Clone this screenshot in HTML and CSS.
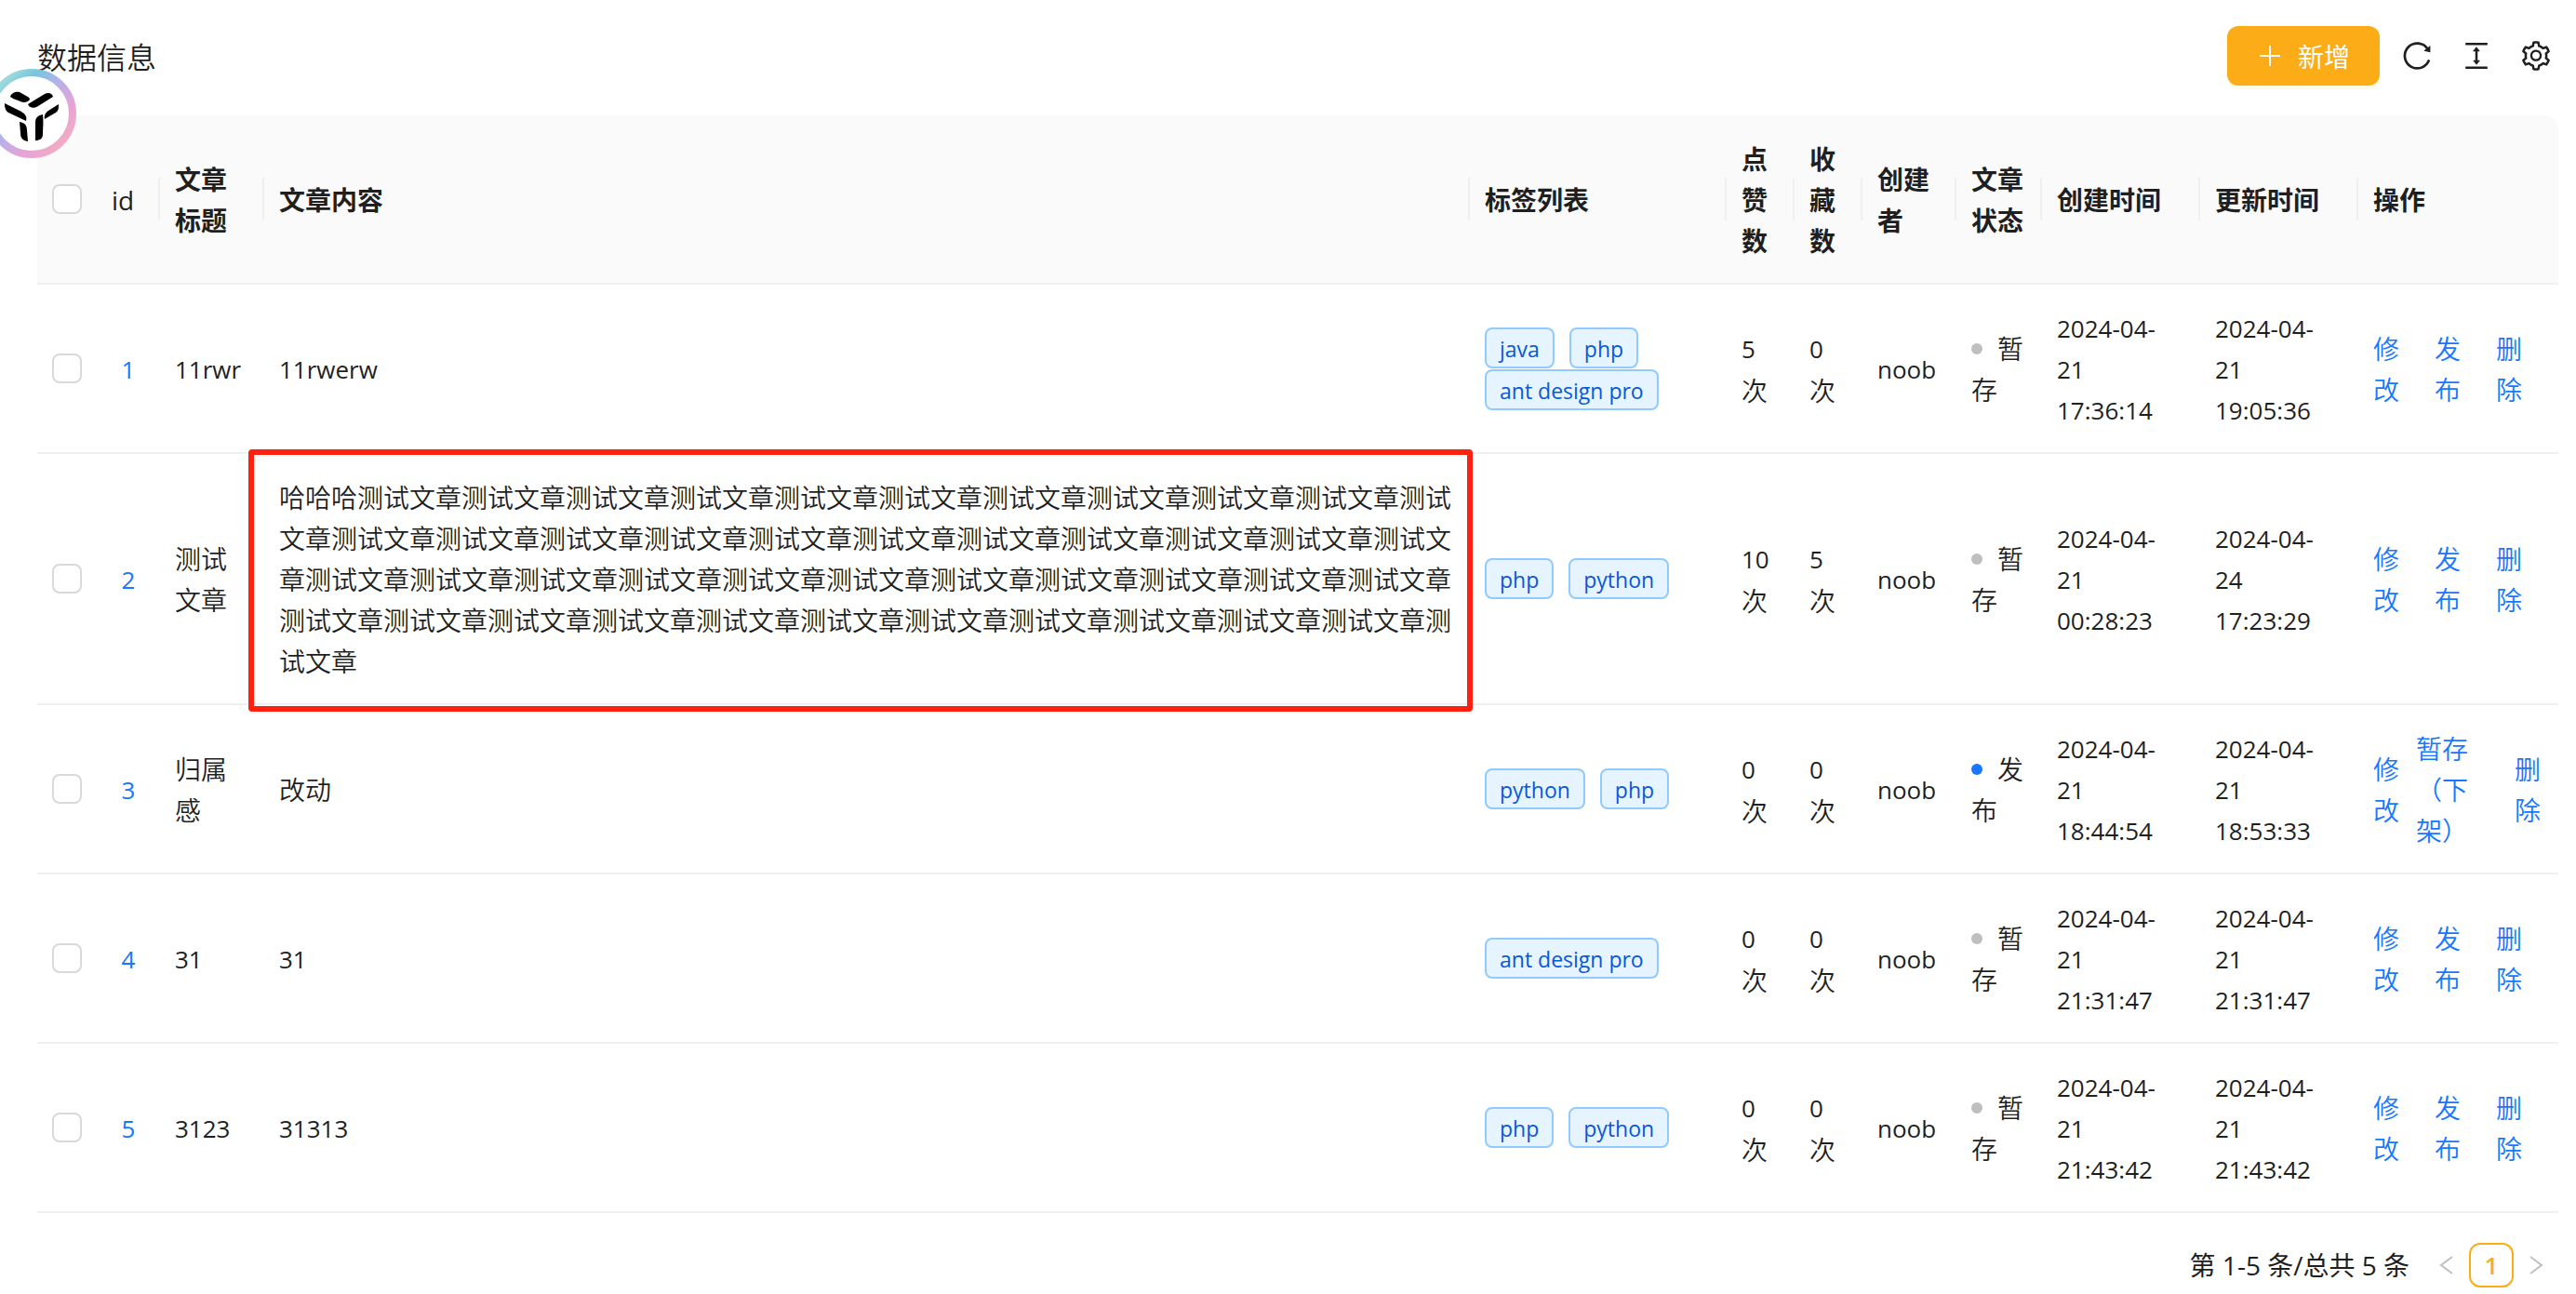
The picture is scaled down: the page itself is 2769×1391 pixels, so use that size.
FILE: index.html
```html
<!DOCTYPE html>
<html lang="zh-CN">
<head>
<meta charset="utf-8">
<title>数据信息</title>
<link rel="stylesheet" href="styles.css">
</head>
<body>
<button class="float-ball" type="button" aria-label="助手">
  <svg viewBox="0 0 96 96" width="96" height="96">
    <defs>
      <linearGradient id="ring" x1="0.1" y1="0.1" x2="0.9" y2="0.9">
        <stop offset="0" stop-color="#a5dedb"/>
        <stop offset="0.22" stop-color="#78c5df"/>
        <stop offset="0.48" stop-color="#b9b0ea"/>
        <stop offset="0.75" stop-color="#e8a2d6"/>
        <stop offset="1" stop-color="#f3adc0"/>
      </linearGradient>
    </defs>
    <circle cx="48" cy="48" r="44" fill="#fff" stroke="url(#ring)" stroke-width="8"/>
    <g fill="#000">
      <path d="M25 30C26 26 31 24 35 25L42 29C45 30 46 32 46 33C44 36 39 37 36 35L28 32Z"/>
      <path d="M44 38L62 27C66 25 70 26 71 30L55 40C51 43 45 42 44 38Z"/>
      <path d="M19 37L37 46C42 49 43 52 42 56L23 47C20 45 19 42 19 37Z"/>
      <path d="M77 38C77 42 77 45 74 47L62 54C61 50 63 47 66 45Z"/>
      <path d="M60 49C61 57 60 64 60 70C60 75 57 77 52 77V58C52 52 55 50 60 49Z"/>
      <path d="M35 57C41 58 43 61 43 66L44 78C38 77 36 74 36 69Z"/>
    </g>
  </svg>
</button>

<main class="page">
  <header class="toolbar">
    <h1 class="toolbar-title">数据信息</h1>
    <div class="toolbar-actions">
      <button class="btn-primary" type="button">
        <svg class="icon-plus" viewBox="0 0 28 28"><path d="M14 3V25M3 14H25" stroke="currentColor" stroke-width="2"/></svg>
        <span>新增</span>
      </button>
      <div class="toolbar-icons">
        <button class="icon-btn" type="button" aria-label="刷新"><svg viewBox="0 0 1024 1024"><path d="M909.1 209.3l-56.4 44.1C775.8 155.1 656.2 92 521.9 92 290 92 102.3 279.5 102 511.5 101.7 743.7 289.8 932 521.9 932c181.3 0 335.8-115 394.6-276.1 1.5-4.2-.7-8.9-4.9-10.3l-56.7-19.5a8 8 0 00-10.1 4.8c-1.8 5-3.8 10-5.9 14.9-17.3 41-42.1 77.8-73.7 109.4A344.77 344.77 0 01655.9 829c-42.3 17.9-87.4 27-133.8 27-46.5 0-91.5-9.1-133.8-27A341.5 341.5 0 01279 755.2a342.16 342.16 0 01-73.7-109.4c-17.9-42.4-27-87.4-27-133.9s9.1-91.5 27-133.9c17.3-41 42.1-77.8 73.7-109.4 31.6-31.6 68.4-56.4 109.3-73.8 42.3-17.9 87.4-27 133.8-27 46.5 0 91.5 9.1 133.8 27a341.5 341.5 0 01109.3 73.8c9.9 9.9 19.2 20.4 27.8 31.4l-60.2 47a8 8 0 003 14.1l175.6 43c5 1.2 9.9-2.6 9.9-7.7l.8-180.9c-.1-6.6-7.8-10.3-13-6.2z"/></svg></button>
        <button class="icon-btn" type="button" aria-label="密度"><svg viewBox="0 0 1024 1024"><path d="M840 836H184c-4.4 0-8 3.6-8 8v60c0 4.4 3.6 8 8 8h656c4.4 0 8-3.6 8-8v-60c0-4.4-3.6-8-8-8zm0-724H184c-4.4 0-8 3.6-8 8v60c0 4.4 3.6 8 8 8h656c4.4 0 8-3.6 8-8v-60c0-4.4-3.6-8-8-8zM610.8 378c6 0 9.4-7 5.7-11.7L515.7 238.7a7.14 7.14 0 00-11.3 0L403.6 366.3a7.23 7.23 0 005.7 11.7H476v268h-62.8c-6 0-9.4 7-5.7 11.7l100.8 127.5c2.9 3.7 8.5 3.7 11.3 0l100.8-127.5c3.7-4.7.4-11.7-5.7-11.7H548V378h62.8z"/></svg></button>
        <button class="icon-btn" type="button" aria-label="列设置"><svg viewBox="0 0 1024 1024"><path d="M924.8 625.7l-65.5-56c3.1-19 4.7-38.4 4.7-57.8s-1.6-38.8-4.7-57.8l65.5-56a32.03 32.03 0 009.3-35.2l-.9-2.6a443.74 443.74 0 00-79.7-137.9l-1.8-2.1a32.12 32.12 0 00-35.1-9.5l-81.3 28.9c-30-24.6-63.5-44-99.7-57.6l-15.7-85a32.05 32.05 0 00-25.8-25.7l-2.7-.5c-52.1-9.4-106.9-9.4-159 0l-2.7.5a32.05 32.05 0 00-25.8 25.7l-15.8 85.4a351.86 351.86 0 00-99 57.4l-81.9-29.1a32 32 0 00-35.1 9.5l-1.8 2.1a446.02 446.02 0 00-79.7 137.9l-.9 2.6c-4.5 12.5-.8 26.5 9.3 35.2l66.3 56.6c-3.1 18.8-4.6 38-4.6 57.1 0 19.2 1.5 38.4 4.6 57.1L99 625.5a32.03 32.03 0 00-9.3 35.2l.9 2.6c18.1 50.4 44.9 96.9 79.7 137.9l1.8 2.1a32.12 32.12 0 0035.1 9.5l81.9-29.1c29.8 24.5 63.1 43.9 99 57.4l15.8 85.4a32.05 32.05 0 0025.8 25.7l2.7.5a449.4 449.4 0 00159 0l2.7-.5a32.05 32.05 0 0025.8-25.7l15.7-85a350 350 0 0099.7-57.6l81.3 28.9a32 32 0 0035.1-9.5l1.8-2.1c34.8-41.1 61.6-87.5 79.7-137.9l.9-2.6c4.5-12.3.8-26.3-9.3-35zM788.3 465.9c2.5 15.1 3.8 30.6 3.8 46.1s-1.3 31-3.8 46.1l-6.6 40.1 74.7 63.9a370.03 370.03 0 01-42.6 73.6L721 702.8l-31.4 25.8c-23.9 19.6-50.5 35-79.3 45.8l-38.1 14.3-17.9 97a377.5 377.5 0 01-85 0l-17.9-97.2-37.8-14.5c-28.5-10.8-55-26.2-78.7-45.7l-31.4-25.9-93.4 33.2c-17-22.9-31.2-47.6-42.6-73.6l75.5-64.5-6.5-40c-2.4-14.9-3.7-30.3-3.7-45.5 0-15.3 1.2-30.6 3.7-45.5l6.5-40-75.5-64.5c11.3-26.1 25.6-50.7 42.6-73.6l93.4 33.2 31.4-25.9c23.7-19.5 50.2-34.9 78.7-45.7l37.9-14.3 17.9-97.2c28.1-3.2 56.8-3.2 85 0l17.9 97 38.1 14.3c28.7 10.8 55.4 26.2 79.3 45.8l31.4 25.8 92.8-32.9c17 22.9 31.2 47.6 42.6 73.6L781.8 426l6.5 39.9zM512 326c-97.2 0-176 78.8-176 176s78.8 176 176 176 176-78.8 176-176-78.8-176-176-176zm79.2 255.2A111.6 111.6 0 01512 614c-29.9 0-58-11.7-79.2-32.8A111.6 111.6 0 01400 502c0-29.9 11.7-58 32.8-79.2C454 401.6 482.1 390 512 390c29.9 0 58 11.6 79.2 32.8A111.6 111.6 0 01624 502c0 29.9-11.7 58-32.8 79.2z"/></svg></button>
      </div>
    </div>
  </header>

  <table class="data-table">
    <colgroup>
      <col class="col-check"><col class="col-id"><col class="col-title"><col class="col-content"><col class="col-tags"><col class="col-count"><col class="col-count"><col class="col-author"><col class="col-status"><col class="col-time"><col class="col-time"><col class="col-ops">
    </colgroup>
    <thead>
      <tr>
        <th class="no-split"><input class="checkbox" type="checkbox" aria-label="全选"></th>
        <th class="latin head-id">id</th>
        <th>文章标题</th>
        <th>文章内容</th>
        <th>标签列表</th>
        <th>点赞数</th>
        <th>收藏数</th>
        <th>创建者</th>
        <th>文章状态</th>
        <th>创建时间</th>
        <th>更新时间</th>
        <th class="no-split">操作</th>
      </tr>
    </thead>
    <tbody>
      <tr>
        <td><input class="checkbox" type="checkbox" aria-label="选择 1"></td>
        <td class="latin index">1</td>
        <td class="latin">11rwr</td>
        <td class="latin">11rwerw</td>
        <td><div class="tags"><span class="tag">java</span><span class="tag">php</span><span class="tag">ant design pro</span></div></td>
        <td><span class="latin">5</span> 次</td>
        <td><span class="latin">0</span> 次</td>
        <td class="latin">noob</td>
        <td><span class="dot"></span>暂存</td>
        <td class="latin">2024-04-<br>21<br>17:36:14</td>
        <td class="latin">2024-04-<br>21<br>19:05:36</td>
        <td><div class="ops"><a href="#">修改</a><a href="#">发布</a><a href="#">删除</a></div></td>
      </tr>
      <tr>
        <td><input class="checkbox" type="checkbox" aria-label="选择 2"></td>
        <td class="latin index">2</td>
        <td>测试文章</td>
        <td class="marked">哈哈哈测试文章测试文章测试文章测试文章测试文章测试文章测试文章测试文章测试文章测试文章测试文章测试文章测试文章测试文章测试文章测试文章测试文章测试文章测试文章测试文章测试文章测试文章测试文章测试文章测试文章测试文章测试文章测试文章测试文章测试文章测试文章测试文章测试文章测试文章测试文章测试文章测试文章测试文章测试文章测试文章测试文章测试文章测试文章测试文章测试文章</td>
        <td><div class="tags"><span class="tag">php</span><span class="tag">python</span></div></td>
        <td><span class="latin">10</span> 次</td>
        <td><span class="latin">5</span> 次</td>
        <td class="latin">noob</td>
        <td><span class="dot"></span>暂存</td>
        <td class="latin">2024-04-<br>21<br>00:28:23</td>
        <td class="latin">2024-04-<br>24<br>17:23:29</td>
        <td><div class="ops"><a href="#">修改</a><a href="#">发布</a><a href="#">删除</a></div></td>
      </tr>
      <tr>
        <td><input class="checkbox" type="checkbox" aria-label="选择 3"></td>
        <td class="latin index">3</td>
        <td>归属感</td>
        <td>改动</td>
        <td><div class="tags"><span class="tag">python</span><span class="tag">php</span></div></td>
        <td><span class="latin">0</span> 次</td>
        <td><span class="latin">0</span> 次</td>
        <td class="latin">noob</td>
        <td><span class="dot dot-live"></span>发布</td>
        <td class="latin">2024-04-<br>21<br>18:44:54</td>
        <td class="latin">2024-04-<br>21<br>18:53:33</td>
        <td><div class="ops ops-live"><a href="#">修改</a><a href="#" class="op-wide">暂存（下架）</a><a href="#">删除</a></div></td>
      </tr>
      <tr>
        <td><input class="checkbox" type="checkbox" aria-label="选择 4"></td>
        <td class="latin index">4</td>
        <td class="latin">31</td>
        <td class="latin">31</td>
        <td><div class="tags"><span class="tag">ant design pro</span></div></td>
        <td><span class="latin">0</span> 次</td>
        <td><span class="latin">0</span> 次</td>
        <td class="latin">noob</td>
        <td><span class="dot"></span>暂存</td>
        <td class="latin">2024-04-<br>21<br>21:31:47</td>
        <td class="latin">2024-04-<br>21<br>21:31:47</td>
        <td><div class="ops"><a href="#">修改</a><a href="#">发布</a><a href="#">删除</a></div></td>
      </tr>
      <tr>
        <td><input class="checkbox" type="checkbox" aria-label="选择 5"></td>
        <td class="latin index">5</td>
        <td class="latin">3123</td>
        <td class="latin">31313</td>
        <td><div class="tags"><span class="tag">php</span><span class="tag">python</span></div></td>
        <td><span class="latin">0</span> 次</td>
        <td><span class="latin">0</span> 次</td>
        <td class="latin">noob</td>
        <td><span class="dot"></span>暂存</td>
        <td class="latin">2024-04-<br>21<br>21:43:42</td>
        <td class="latin">2024-04-<br>21<br>21:43:42</td>
        <td><div class="ops"><a href="#">修改</a><a href="#">发布</a><a href="#">删除</a></div></td>
      </tr>
    </tbody>
  </table>

  <nav class="pagination" aria-label="分页">
    <span class="total">第 1-5 条/总共 5 条</span>
    <button class="page-arrow" type="button" aria-label="上一页" disabled><svg viewBox="0 0 24 24"><path d="M18 3L6 12L18 21"/></svg></button>
    <button class="page-item latin" type="button" aria-current="page">1</button>
    <button class="page-arrow" type="button" aria-label="下一页" disabled><svg viewBox="0 0 24 24"><path d="M6 3L18 12L6 21"/></svg></button>
  </nav>
</main>
</body>
</html>
```
FILE: styles.css
```css
* {
  box-sizing: border-box;
}

body {
  margin: 0;
  background: #fff;
  color: #1f1f1f;
  font-family: "Noto Sans CJK SC", "Open Sans", sans-serif;
  font-size: 28px;
  font-weight: 350;
  line-height: 44px;
  text-spacing-trim: space-all;
}

button {
  margin: 0;
  padding: 0;
  border: 0;
  background: none;
  color: inherit;
  font: inherit;
  cursor: pointer;
}

a {
  color: #1677ff;
  text-decoration: none;
}

.latin {
  font-family: "Open Sans", "Noto Sans CJK SC", sans-serif;
  font-size: 26px;
  font-weight: 400;
}

.page {
  padding: 28px 19px 7px 40px;
}

/* floating assistant button, partly off the left edge */
.float-ball {
  position: absolute;
  top: 74px;
  left: -14px;
  z-index: 2;
  width: 96px;
  height: 96px;
}

.float-ball svg {
  display: block;
}

/* toolbar */
.toolbar {
  display: flex;
  align-items: center;
  justify-content: space-between;
  height: 64px;
  margin-bottom: 32px;
}

.toolbar-title {
  margin: 0;
  font-size: 32px;
  font-weight: 350;
}

.toolbar-actions {
  display: flex;
  align-items: center;
  gap: 22px;
  padding-right: 6px;
}

.toolbar-icons {
  display: flex;
  gap: 28px;
}

.btn-primary {
  display: flex;
  align-items: center;
  gap: 16px;
  height: 64px;
  padding: 0 32px;
  border-radius: 12px;
  background: #fcac17;
  box-shadow: 0 4px 0 #fffbe6;
  color: #fff;
  font-weight: 400;
}

.icon-plus {
  width: 28px;
  height: 28px;
}

.icon-btn svg {
  display: block;
  width: 36px;
  height: 36px;
  fill: currentColor;
}

/* table */
.data-table {
  width: 100%;
  table-layout: fixed;
  border-collapse: separate;
  border-spacing: 0;
}

.col-check { width: 64px; }
.col-id { width: 68px; }
.col-title { width: 112px; }
.col-tags { width: 276px; }
.col-count { width: 73px; }
.col-author { width: 101px; }
.col-status { width: 92px; }
.col-time { width: 170px; }
.col-ops { width: 215px; }

th,
td {
  position: relative;
  padding: 24px 16px;
  border-bottom: 2px solid #f0f0f0;
  text-align: left;
  vertical-align: middle;
}

th.latin,
td.latin {
  padding-top: 25px;
  padding-bottom: 23px;
}

th {
  background: #fafafa;
  font-weight: 700;
}

th:last-child {
  border-top-right-radius: 16px;
}

th:not(.no-split)::after {
  content: "";
  position: absolute;
  top: 50%;
  right: 0;
  width: 2px;
  height: 46px;
  margin-top: -23px;
  background: #f0f0f0;
}

th.head-id {
  font-size: 28px;
  font-weight: 500;
}

.index {
  color: #1677ff;
  text-align: center;
}

.checkbox {
  display: block;
  appearance: none;
  width: 32px;
  height: 32px;
  margin: 0;
  border: 2px solid #d9d9d9;
  border-radius: 8px;
  background: #fff;
}

.tags {
  display: flex;
  flex-wrap: wrap;
  gap: 1px 16px;
}

.tag {
  height: 44px;
  padding: 0 14px;
  border: 2px solid #91caff;
  border-radius: 8px;
  background: #e6f4ff;
  color: #0958d9;
  font-family: "Open Sans", sans-serif;
  font-size: 23px;
  font-weight: 400;
  line-height: 42px;
  white-space: nowrap;
}

.dot {
  display: inline-block;
  width: 12px;
  height: 12px;
  margin-right: 16px;
  border-radius: 50%;
  background: #bfbfbf;
  vertical-align: 5px;
}

.dot-live {
  background: #1677ff;
}

.ops {
  display: grid;
  grid-template-columns: 28px 28px 28px;
  align-items: center;
  gap: 38px;
}

.ops-live {
  grid-template-columns: 28px 88px 28px;
  gap: 18px;
}

.op-wide {
  padding-right: 32px;
}

/* highlight frame round the long article body */
.marked::after {
  content: "";
  position: absolute;
  top: -5px;
  right: -3px;
  bottom: -9px;
  left: -17px;
  z-index: 1;
  border: 6px solid #ff2010;
  border-radius: 4px;
}

/* pagination */
.pagination {
  display: flex;
  align-items: center;
  justify-content: flex-end;
  height: 48px;
  margin-top: 32px;
}

.total {
  margin-right: 16px;
  font-family: "Open Sans", "Noto Sans CJK SC", sans-serif;
  font-weight: 400;
}

.page-item,
.page-arrow {
  display: flex;
  align-items: center;
  justify-content: center;
  width: 48px;
  height: 48px;
}

.page-item {
  border: 2px solid #faad14;
  border-radius: 12px;
  color: #faad14;
  font-weight: 600;
}

.page-arrow svg {
  width: 24px;
  height: 24px;
  fill: none;
  stroke: #bfbfbf;
  stroke-width: 2;
}
```
